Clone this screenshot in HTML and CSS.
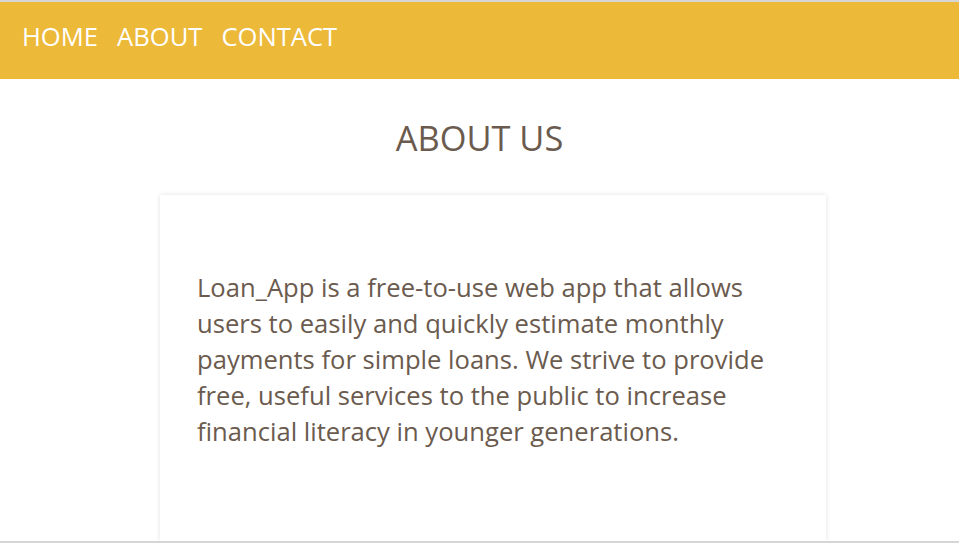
FILE: index.html
```html
<!DOCTYPE html>
<html>
<head>
<meta charset="utf-8">
<link rel="stylesheet" href="styles.css">
<title>About</title>
</head>
<body>
<div class="page">
  <nav class="nav">
    <a href="#">HOME</a>
    <a href="#">ABOUT</a>
    <a href="#">CONTACT</a>
  </nav>
  <main class="main">
    <h1 class="title">ABOUT US</h1>
    <section class="card">
      <p>Loan_App is a free-to-use web app that allows users to easily and quickly estimate monthly payments for simple loans. We strive to provide free, useful services to the public to increase financial literacy in younger generations.</p>
    </section>
  </main>
</div>
</body>
</html>
```

FILE: styles.css
```css
* { box-sizing: border-box; }
html, body { margin: 0; padding: 0; }
body {
  font-family: "Open Sans", "Noto Sans", sans-serif;
  background: #fff;
  color: #6b5b4e;
}
.page {
  height: 100vh;
  overflow: hidden;
  border-top: 2px solid #d6d6d6;
  border-bottom: 2px solid #d6d6d6;
  display: flex;
  flex-direction: column;
}
.nav {
  background: #ecb939;
  height: 77px;
  display: flex;
  align-items: center;
  gap: 19px;
  padding: 0 22px 8px;
  flex-shrink: 0;
}
.nav a {
  color: #fff;
  text-decoration: none;
  font-size: 25.6px;
}
.main {
  flex: 1;
  display: flex;
  flex-direction: column;
  align-items: center;
  min-height: 0;
}
.title {
  font-weight: 400;
  font-size: 34.4px;
  margin: 40px 0 0;
  line-height: 1.1;
}
.card {
  margin-top: 38px;
  width: 666px;
  margin-left: 27px;
  flex: 1;
  box-shadow: 0 0 5px rgba(0,0,0,0.12);
  padding: 75px 37px;
}
.card p {
  margin: 0;
  font-size: 25.6px;
  line-height: 36px;
}
```
